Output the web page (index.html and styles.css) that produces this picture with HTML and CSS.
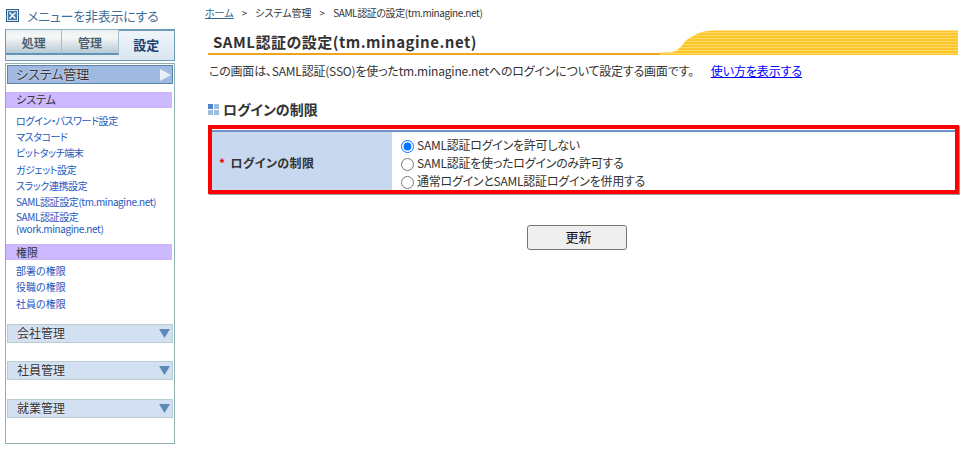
FILE: index.html
```html
<!DOCTYPE html>
<html lang="ja">
<head>
<meta charset="utf-8">
<title>SAML認証の設定</title>
<link rel="stylesheet" href="styles.css">
</head>
<body>
<div class="page">
  <aside class="sidebar">
    <div class="hide-row">
      <svg class="hide-icon" width="13" height="13" viewBox="0 0 13 13"><rect x=".5" y=".5" width="12" height="12" fill="#dbe6f0" stroke="#2f5f8f"/><rect x="2" y="2" width="9" height="9" fill="#4a7aa8"/><path d="M3.500 3.500l6 6M9.500 3.500l-6 6" stroke="#fff" stroke-width="1.400" fill="none"/></svg>
      <span>メニューを非表示にする</span>
    </div>
    <div class="tabs">
      <div class="tab">処理</div>
      <div class="tab">管理</div>
      <div class="tab tab-active">設定</div>
    </div>
    <nav class="panel">
      <div class="bar bar-open"><span>システム管理</span><svg width="14" height="14" viewBox="0 0 14 14"><path d="M2 1l11 6-11 6z" fill="#e8f0fa"/></svg></div>
      <div class="sec">システム</div>
      <ul class="links links-tight">
        <li><a>ログイン・パスワード設定</a></li>
        <li><a>マスタコード</a></li>
        <li><a>ピットタッチ端末</a></li>
        <li><a>ガジェット設定</a></li>
        <li><a>スラック連携設定</a></li>
        <li><a>SAML認証設定(tm.minagine.net)</a></li>
        <li class="two"><a>SAML認証設定<br>(work.minagine.net)</a></li>
      </ul>
      <div class="sec sec-2">権限</div>
      <ul class="links links-2">
        <li><a>部署の権限</a></li>
        <li><a>役職の権限</a></li>
        <li><a>社員の権限</a></li>
      </ul>
      <div class="bar bar-first"><span>会社管理</span><svg width="11" height="9" viewBox="0 0 11 9"><path d="M0 0h11L5.500 9z" fill="#5c8ab8"/></svg></div>
      <div class="bar bar-next"><span>社員管理</span><svg width="11" height="9" viewBox="0 0 11 9"><path d="M0 0h11L5.500 9z" fill="#5c8ab8"/></svg></div>
      <div class="bar bar-last"><span>就業管理</span><svg width="11" height="9" viewBox="0 0 11 9"><path d="M0 0h11L5.500 9z" fill="#5c8ab8"/></svg></div>
    </nav>
  </aside>
  <main class="main">
    <div class="crumbs"><a class="home">ホーム</a><span class="sep">&gt;</span><span>システム管理</span><span class="sep">&gt;</span><span class="crumb-last">SAML認証の設定(tm.minagine.net)</span></div>
    <div class="title">
      <h1>SAML認証の設定(tm.minagine.net)</h1>
      <svg class="swoosh" width="298" height="25" viewBox="0 0 298 25">
        <defs><pattern id="st" width="3" height="3" patternUnits="userSpaceOnUse"><rect width="3" height="3" fill="#fdc62a"/><rect y="2" width="3" height="1" fill="#ffdb66"/></pattern></defs>
        <path d="M0 22.500H10C16 22 20 18 23 14C26 10 29 8 33 6C36 4 39 3 42 2C46 1 50 .5 56 .5H298V25H0z" fill="url(#st)"/>
      </svg>
    </div>
    <p class="desc"><span>この画面は、SAML認証(SSO)を使ったtm.minagine.netへのログインについて設定する画面です。</span><a class="help">使い方を表示する</a></p>
    <h2 class="sub"><svg width="11" height="11" viewBox="0 0 11 11"><rect width="5" height="5" fill="#4a86c8"/><rect x="6" width="5" height="5" fill="#9dbce0"/><rect y="6" width="5" height="5" fill="#9dbce0"/><rect x="6" y="6" width="5" height="5" fill="#9dbce0"/></svg>ログインの制限</h2>
    <div class="redbox">
      <div class="row">
        <div class="label"><span class="req">*</span>ログインの制限</div>
        <div class="opts">
          <label><input type="radio" name="r" checked>SAML認証ログインを許可しない</label>
          <label><input type="radio" name="r">SAML認証を使ったログインのみ許可する</label>
          <label><input type="radio" name="r">通常ログインとSAML認証ログインを併用する</label>
        </div>
      </div>
    </div>
    <div class="actions"><button class="update" type="button">更新</button></div>
  </main>
</div>
</body>
</html>
```
FILE: styles.css
```css
* { box-sizing: border-box; }
html, body { margin: 0; padding: 0; background: #fff; }
body {
  font-family: "Noto Sans CJK JP", "Liberation Sans", sans-serif;
  font-feature-settings: "palt";
  color: #333;
  font-size: 12px;
  overflow: hidden;
}
.page { display: flex; width: 970px; height: 453px; padding-left: 5px; }

/* sidebar */
.sidebar { width: 170px; flex: none; padding-top: 9px; display: flex; flex-direction: column; }
.hide-row { display: flex; align-items: center; height: 13px; padding-left: 1px; gap: 8px; color: #3f6f99; font-size: 13px; line-height: 13px; letter-spacing: -.25px; white-space: nowrap; }
.hide-row span { margin-bottom: 1px; }
.hide-icon { flex: none; }
.tabs { display: flex; height: 32px; margin-top: 7px; border: 1px solid #6d9bb5; border-top: 0; background: #e4edf3; }
.tab {
  flex: 1; height: 26px;
  border-top: 1px solid #8fb0c4; border-right: 1px solid #a5bfca; border-bottom: 2px solid #5f94b8;
  background: linear-gradient(#e9f0f0, #f6f8f8 30%, #c6d4dc 85%, #b5cbd8);
  color: #4e5f70; font-size: 12px; font-weight: 700; line-height: 26px; text-align: center;
}
.tab-active {
  height: 31px; border: 0; border-top: 2px solid #6d9bb5;
  background: linear-gradient(#eef5fa, #d9e7f0);
  color: #1f3f70; font-size: 13px; line-height: 28px;
}
.panel { flex: none; height: 381px; margin-top: 2px; border: 1px solid #8fb0b0; padding: 1px 1px 0; background: #fff; }
.bar { display: flex; align-items: center; justify-content: space-between; height: 19px; border: 1px solid #b9cdd2; background: #d3e0f2; padding: 0 2px 0 9px; color: #333; font-size: 12px; line-height: 17px; text-shadow: 0 0 2px #fff; }
.bar span { margin-bottom: 2px; }
.bar-open { background: #a0b9e0; border-color: #5a86ae; padding: 0 0 0 8px; font-size: 13px; }
.bar-first { margin-top: 12px; }
.bar-next { margin-top: 18px; }
.bar-last { margin-top: 19px; }
.sec { height: 16px; margin: 8px 1px 0 -1px; padding-left: 9px; background: #cdb9ff; color: #333; font-size: 11px; line-height: 13px; border: 1px solid #c9b5f5; }
.sec-2 { margin-top: 9px; line-height: 14px; }
.links { list-style: none; margin: 5px 0 0; padding: 0 0 0 9px; }
.links-2 { margin-top: 3px; }
.links-tight { letter-spacing: -.4px; }
.links li { height: 16.200px; line-height: 16px; font-size: 10px; white-space: nowrap; color: #2257c0; }
.links li.two { height: 25px; line-height: 12px; padding-top: 1px; }
.links li a { color: #2257c0; }

/* main */
.main { width: 750px; flex: none; margin-left: 33px; }
.crumbs { display: flex; margin: 6px 0 0 -3px; height: 14px; line-height: 14px; font-size: 10px; white-space: nowrap; color: #333; }
.crumb-last { letter-spacing: -.4px; }
.home { color: #33688f; text-decoration: underline; }
.sep { margin: 0 8px; }
.title { display: flex; align-items: flex-end; height: 25px; margin-top: 10px; }
.title h1 { flex: 1; height: 25px; margin: 0; padding: 0 0 0 5px; border-bottom: 2px solid #eda51f; color: #333; font-size: 15px; font-weight: 700; line-height: 23px; white-space: nowrap; letter-spacing: .5px; }
.swoosh { flex: none; display: block; }
.desc { display: flex; margin: 8px 0 0 1px; line-height: 16px; font-size: 12px; white-space: nowrap; }
.desc span { letter-spacing: -.2px; }
.help { margin-left: 17px; color: #00f; text-decoration: underline; letter-spacing: -.1px; }
.sub { display: flex; align-items: center; gap: 4px; height: 18px; margin: 21px 0 0; color: #333; font-size: 14px; font-weight: 700; line-height: 18px; }
.redbox { margin: 7px -1px 0 0; border: 4px solid #f00; box-shadow: 1px 1px 0 #999; height: 69px; background: #fff; }
.row { display: flex; height: 60px; margin-top: 1px; border-top: 2px solid #6f93c8; }
.label { width: 180px; flex: none; display: flex; align-items: center; padding: 2px 0 0 7px; background: #c8d8ee; font-size: 12px; font-weight: 700; letter-spacing: .4px; }
.req { color: #e00; margin-right: 5px; }
.opts { flex: 1; display: flex; flex-direction: column; padding: 4px 0 0 9px; font-size: 12px; line-height: 18px; letter-spacing: -.25px; }
.opts label { display: flex; align-items: center; height: 18px; white-space: nowrap; }
.opts input { width: 13px; height: 13px; margin: 2px 3px 0 0; flex: none; }
.actions { display: flex; justify-content: center; margin-top: 31px; padding-right: 12px; }
.update { width: 100px; height: 25px; padding: 0 0 2px 3px; border: 1px solid #767676; border-radius: 3px; background: #efefef; color: #111; font: inherit; font-size: 13px; }
```
